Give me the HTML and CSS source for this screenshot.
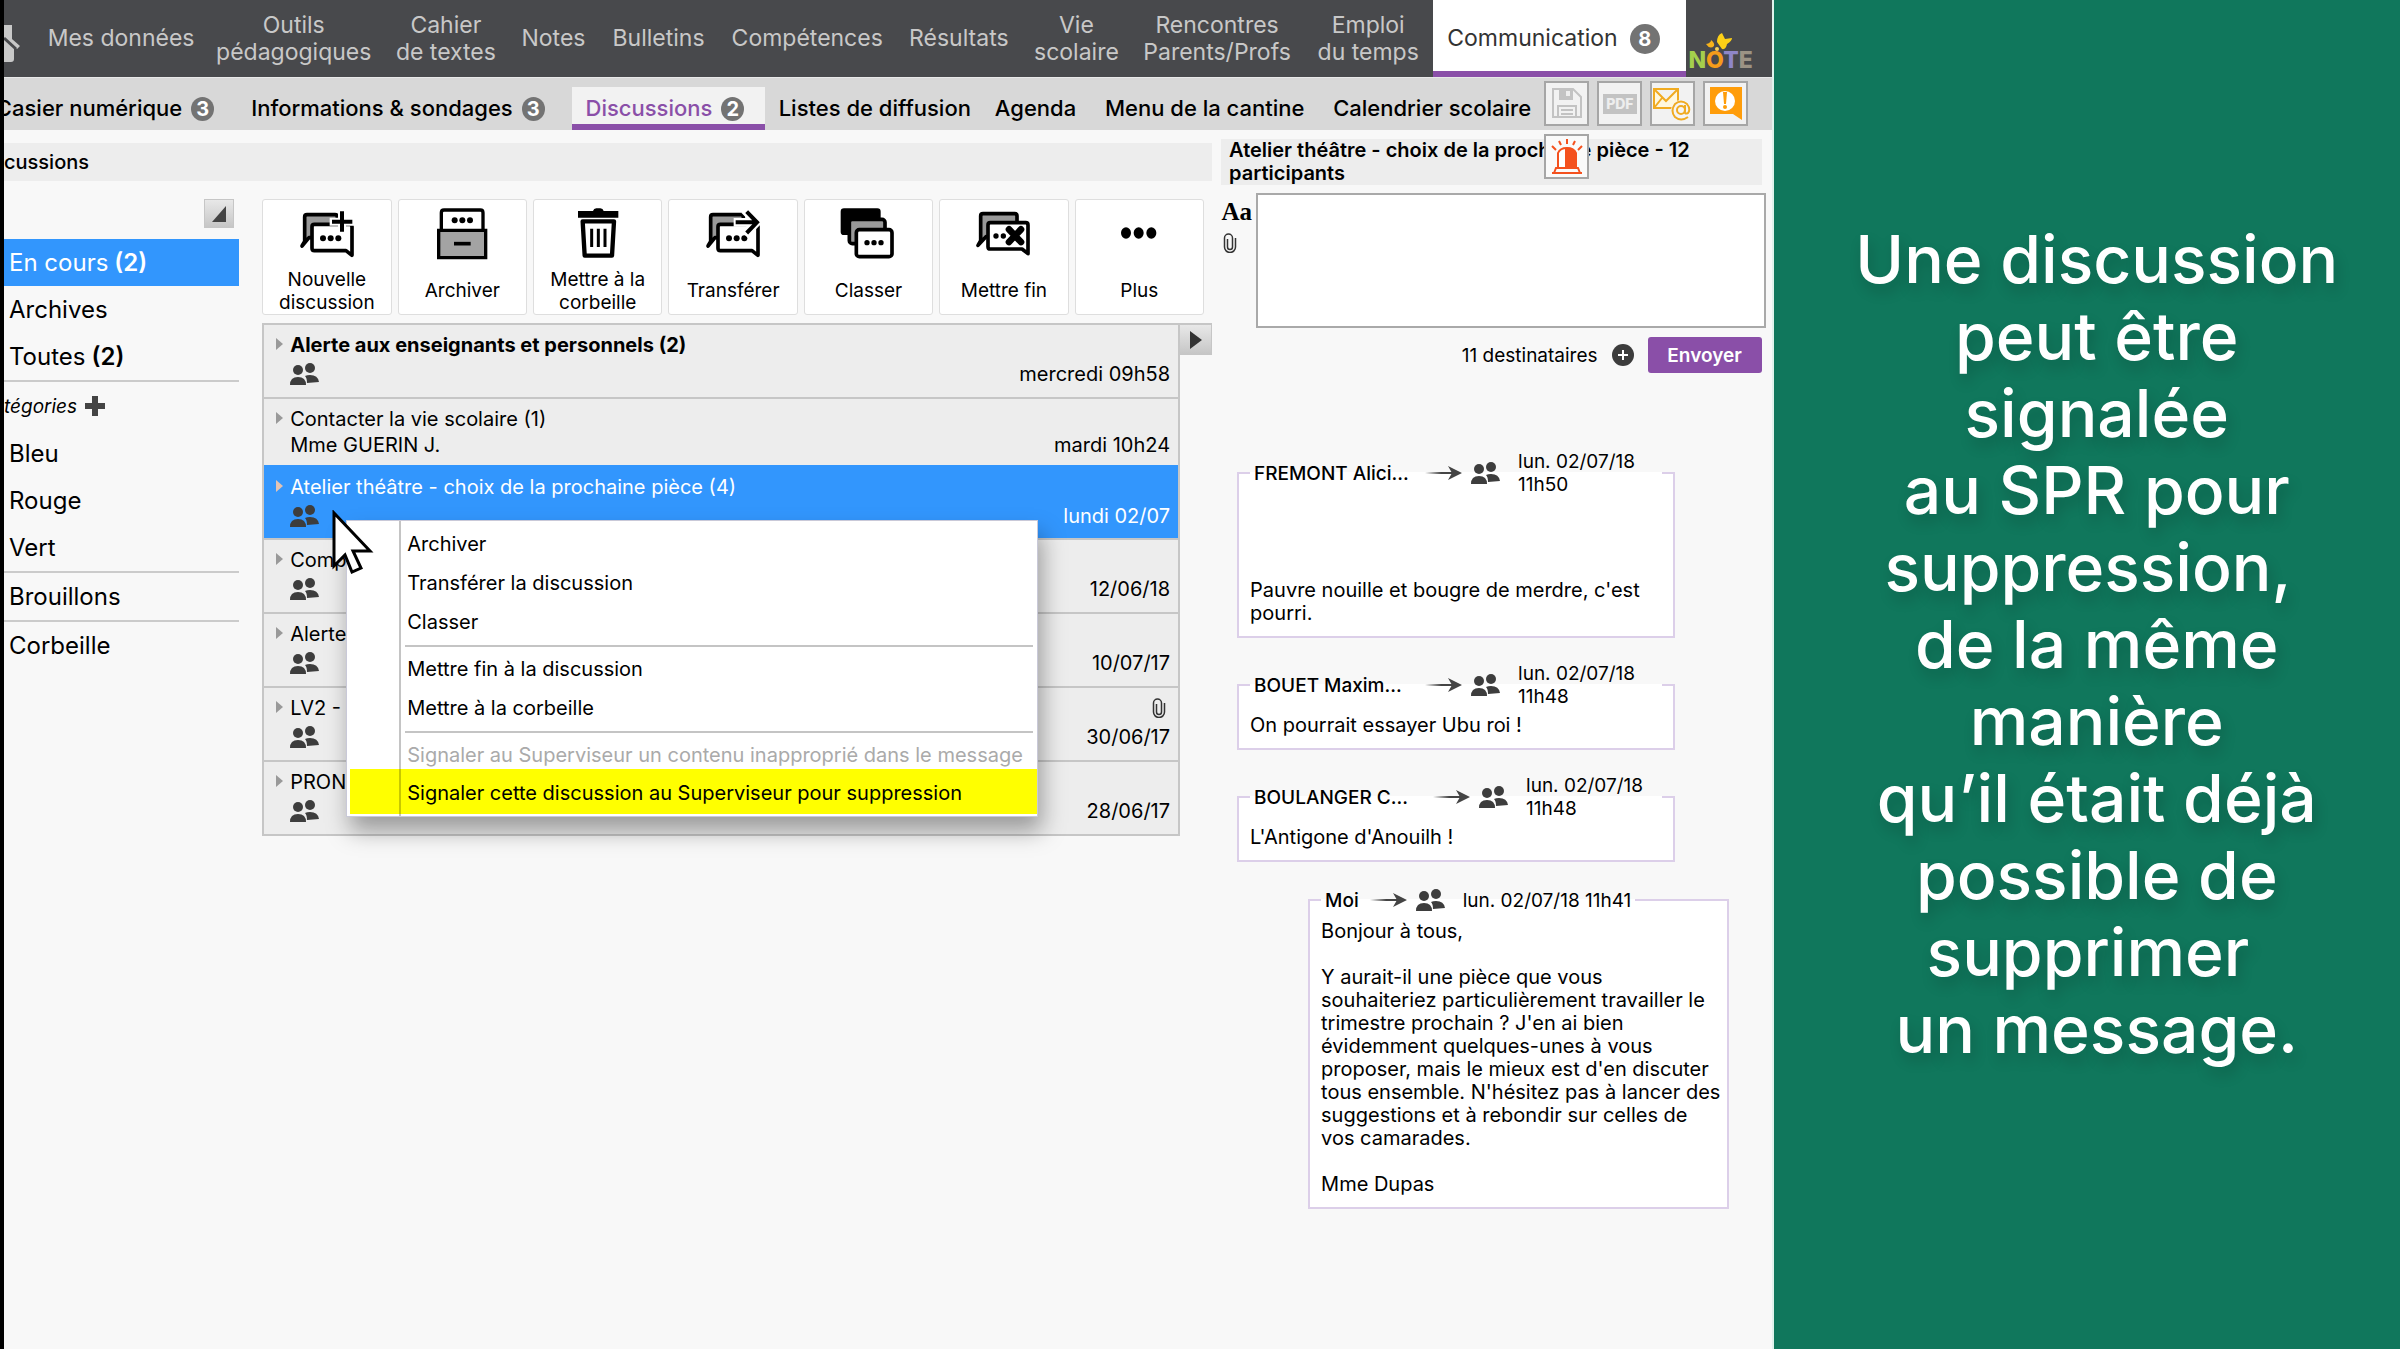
FILE: index.html
```html
<!DOCTYPE html>
<html lang="fr">
<head>
<meta charset="utf-8">
<title>Discussions</title>
<link rel="stylesheet" href="styles.css">
</head>
<body>
<svg class="defs" aria-hidden="true">
  <symbol id="people" viewBox="0 0 30 22">
    <circle cx="20" cy="5" r="5"/><path d="M17 20q0-5-2-7 2-1 5-1 8 0 9 7z"/>
    <circle cx="8" cy="7" r="5"/><path d="M0 22q0-8 8-8t8 8z"/>
  </symbol>
  <symbol id="arrow" viewBox="0 0 38 16">
    <path d="M0 7h27v2H0z" fill="url(#fade)"/><path d="M23 1l14 7-14 7 4-7z"/>
  </symbol>
  <symbol id="clip" viewBox="0 0 14 20">
    <path d="M4.500 6v8a2.500 2.500 0 0 0 5 0V5a4 4 0 0 0-8 0v9a5.500 5.500 0 0 0 11 0V5" fill="none" stroke="#333" stroke-width="1.500"/>
  </symbol>
  <linearGradient id="fade"><stop offset="0" stop-color="#444" stop-opacity="0"/><stop offset=".6" stop-color="#444"/></linearGradient>
</svg>

<div class="app">
  <nav class="nav">
    <a class="nav-home" href="#" aria-label="Accueil"><svg width="16" height="40" viewBox="0 0 16 40"><path d="M0 2h8v14l8 7-3 3-3-2v12q0 3-3 3H0V17z" fill="#c8c8c8"/><path d="M0 15l12 11" stroke="#48494c" stroke-width="3"/></svg></a>
    <a href="#">Mes données</a>
    <a href="#">Outils<br>pédagogiques</a>
    <a href="#">Cahier<br>de textes</a>
    <a href="#">Notes</a>
    <a href="#">Bulletins</a>
    <a href="#">Compétences</a>
    <a href="#">Résultats</a>
    <a href="#">Vie<br>scolaire</a>
    <a href="#">Rencontres<br>Parents/Profs</a>
    <a href="#">Emploi<br>du temps</a>
    <a class="active" href="#">Communication<span class="badge badge-big">8</span></a>
    <div class="logo">
      <svg width="30" height="18" viewBox="0 0 30 18"><path d="M11 9q0-7 5-9l3 6 7-1q0 3-5 6-1 6-5 5z" fill="#fdd017"/><path d="M0 11q5-1 5-4 4 3 3 6-4 4-8-2z" fill="#f6b21b"/><circle cx="11" cy="16" r="2" fill="#f6d35b"/></svg>
      <span><b class="n">N</b><b class="o">O</b><b class="t">T</b><b class="e">E</b></span>
    </div>
  </nav>

  <nav class="subnav">
    <a class="cut" href="#">Casier numérique<span class="badge">3</span></a>
    <a href="#">Informations &amp; sondages<span class="badge">3</span></a>
    <a class="active" href="#">Discussions<span class="badge">2</span></a>
    <a href="#">Listes de diffusion</a>
    <a href="#">Agenda</a>
    <a href="#">Menu de la cantine</a>
    <a href="#">Calendrier scolaire</a>
    <div class="tools">
      <button class="tool" aria-label="Enregistrer"><svg width="30" height="32" viewBox="0 0 30 32" fill="none" stroke="#c3c3c3" stroke-width="2"><path d="M1 1h20l8 8v20H1zM6 29V18h18v11M9 22h12M9 26h12"/><path d="M8 1h12v10H8z" fill="#c3c3c3"/><path d="M14 3h4v5h-4z" fill="#eee" stroke="none"/></svg></button>
      <button class="tool"><span class="pdf">PDF</span></button>
      <button class="tool" aria-label="Courriel"><svg width="39" height="36" viewBox="0 0 39 36" fill="none" stroke="#f0ab22" stroke-width="2"><path d="M1 3h24v19H1zM1 3l12 12L25 3M1 22l8-10" fill="#fff8df"/><circle cx="28" cy="24" r="10" fill="#f5f5f5" stroke="none"/><path d="M35 31q-7 5-13 0-5-6 0-13 6-5 12 0 4 5 1 9-4 2-3-3v-5"/><circle cx="28" cy="24" r="4"/></svg></button>
      <button class="tool" aria-label="Signaler"><svg width="34" height="34" viewBox="0 0 34 34"><path d="M1 0h32v33l-9-6H1z" fill="#ff9d0a"/><circle cx="16" cy="14" r="10" fill="#fff"/><path d="M14 5h4l-1 12h-2z" fill="#ff9d0a"/><circle cx="16" cy="20" r="2" fill="#ff9d0a"/></svg></button>
      <button class="tool alarm" aria-label="Alerte"><svg width="34" height="36" viewBox="0 0 34 36"><path d="M8 28V14q2-5 9-5t9 5v14" fill="#fff" stroke="#f4511e" stroke-width="2"/><path d="M15 9q9-1 11 5v14H15z" fill="#f4511e"/><path d="M2 34h30M4 34l2-5h22l2 5M17 0v5M9 2l2 4M25 2l-2 4M2 7l4 4M32 7l-4 4" fill="none" stroke="#f4511e" stroke-width="2"/></svg></button>
    </div>
  </nav>

  <main class="main">
    <h1 class="bar">cussions</h1>
    <h2 class="topic">Atelier théâtre - choix de la prochaine pièce - 12 participants</h2>

    <div class="left">
      <div class="side">
        <button class="mini" aria-label="Réduire"><svg width="14" height="16"><path d="M14 0v16H0z" fill="#444"/></svg></button>
        <ul class="folders">
          <li class="selected">En cours <b>(2)</b></li>
          <li>Archives</li>
          <li>Toutes <b>(2)</b></li>
          <li class="category"><em>tégories</em><svg width="20" height="20"><path d="M7 0h6v7h7v6h-7v7H7v-7H0V7h7z" fill="#444"/></svg></li>
          <li>Bleu</li>
          <li>Rouge</li>
          <li>Vert</li>
          <li class="ruled">Brouillons</li>
          <li class="ruled">Corbeille</li>
        </ul>
      </div>

      <div class="center">
        <div class="actions">
          <button><svg viewBox="0 0 180 165"><g fill="#999" stroke="#000" stroke-width="11" stroke-linejoin="round"><path d="M15 120l8-14V33q0-7 7-7h84q7 0 7 7v62H36z"/><path d="M52 55h106q7 0 7 7v86l-18-14H52q-7 0-7-7V62q0-7 7-7z" fill="#fff"/></g><circle cx="78" cy="97" r="9"/><circle cx="101" cy="97" r="9"/><circle cx="124" cy="97" r="9"/><path d="M135 8v76M98 47h76" stroke="#fff" stroke-width="24"/><path d="M135 16v61M105 47h61" stroke="#000" stroke-width="12"/></svg><span>Nouvelle discussion</span></button>
          <button><svg viewBox="0 0 180 165"><path d="M28 73V20q0-8 8-8h109q8 0 8 8v53" fill="#fff" stroke="#000" stroke-width="10"/><path d="M20 73h141v82H20z" fill="#a3a3a3" stroke="#000" stroke-width="10"/><path d="M66 113h50" stroke="#000" stroke-width="11"/><circle cx="68" cy="43" r="9"/><circle cx="91" cy="43" r="9"/><circle cx="114" cy="43" r="9"/></svg><span>Archiver</span></button>
          <button><svg viewBox="0 0 180 165"><path d="M30 15h45q2-8 10-8h12q8 0 10 8h44v20H30z"/><path d="M44 46h94l-6 103H50z" fill="#fff" stroke="#000" stroke-width="13" stroke-linejoin="round"/><path d="M71 68v55M91 68v55M111 68v55" stroke="#000" stroke-width="9"/></svg><span>Mettre à la corbeille</span></button>
          <button><svg viewBox="0 0 180 165"><g fill="#999" stroke="#000" stroke-width="11" stroke-linejoin="round"><path d="M15 120l8-14V33q0-7 7-7h84q7 0 7 7v62H36z"/><path d="M52 55h106q7 0 7 7v86l-18-14H52q-7 0-7-7V62q0-7 7-7z" fill="#fff"/></g><circle cx="78" cy="97" r="9"/><circle cx="101" cy="97" r="9"/><circle cx="124" cy="97" r="9"/><path d="M92 49h68M125 12l36 37-36 37" stroke="#fff" stroke-width="26" fill="none"/><path d="M98 49h64M131 17l31 32-31 32" stroke="#000" stroke-width="12" fill="none"/></svg><span>Transférer</span></button>
          <button><svg viewBox="0 0 180 165"><rect x="5" y="7" width="120" height="80" rx="10"/><g stroke="#000" stroke-width="11"><rect x="31" y="40" width="107" height="73" rx="9" fill="#999"/><rect x="52" y="71" width="107" height="81" rx="9" fill="#fff"/></g><circle cx="84" cy="110" r="8"/><circle cx="105" cy="110" r="8"/><circle cx="126" cy="110" r="8"/></svg><span>Classer</span></button>
          <button><svg viewBox="0 0 180 165"><g fill="#999" stroke="#000" stroke-width="11" stroke-linejoin="round"><path d="M12 118l8-14V30q0-7 7-7h95q7 0 7 7v62H36z"/><path d="M49 50h106q7 0 7 7v86l-18-14H49q-7 0-7-7V57q0-7 7-7z" fill="#fff"/></g><circle cx="66" cy="90" r="8"/><circle cx="88" cy="90" r="8"/><path d="M105 70l36 38M141 70l-36 38" stroke="#000" stroke-width="20" stroke-linecap="round"/></svg><span>Mettre fin</span></button>
          <button><svg viewBox="0 0 180 165"><ellipse cx="51" cy="81" rx="15" ry="17"/><ellipse cx="89" cy="81" rx="15" ry="17"/><ellipse cx="127" cy="81" rx="15" ry="17"/></svg><span>Plus</span></button>
        </div>

        <div class="threads">
          <ul class="list">
            <li class="unread"><div class="title">Alerte aux enseignants et personnels (2)</div><div class="meta"><svg class="people"><use href="#people"/></svg><time>mercredi 09h58</time></div></li>
            <li class="direct"><div class="title">Contacter la vie scolaire (1)</div><div class="meta">Mme GUERIN J.<time>mardi 10h24</time></div></li>
            <li class="current"><div class="title">Atelier théâtre - choix de la prochaine pièce (4)</div><div class="meta"><svg class="people"><use href="#people"/></svg><time>lundi 02/07</time></div></li>
            <li><div class="title">Comp</div><div class="meta"><svg class="people"><use href="#people"/></svg><time>12/06/18</time></div></li>
            <li><div class="title">Alerte</div><div class="meta"><svg class="people"><use href="#people"/></svg><time>10/07/17</time></div></li>
            <li><div class="title">LV2 - V<svg class="clip"><use href="#clip"/></svg></div><div class="meta"><svg class="people"><use href="#people"/></svg><time>30/06/17</time></div></li>
            <li><div class="title">PRON</div><div class="meta"><svg class="people"><use href="#people"/></svg><time>28/06/17</time></div></li>
          </ul>
          <button class="mini" aria-label="Déplier"><svg width="12" height="18"><path d="M0 0l12 9-12 9z" fill="#333"/></svg></button>

          <div class="menu" role="menu">
            <button role="menuitem">Archiver</button>
            <button role="menuitem">Transférer la discussion</button>
            <button role="menuitem">Classer</button>
            <hr>
            <button role="menuitem">Mettre fin à la discussion</button>
            <button role="menuitem">Mettre à la corbeille</button>
            <hr>
            <button role="menuitem" disabled>Signaler au Superviseur un contenu inapproprié dans le message</button>
            <button role="menuitem" class="marked">Signaler cette discussion au Superviseur pour suppression</button>
          </div>
          <svg class="cursor" viewBox="0 0 42 64"><path d="M2 3v53l11-11 7 17 9-4-8-17h17z" fill="#fff" stroke="#000" stroke-width="3"/></svg>
        </div>
      </div>
    </div>

    <section class="right">
      <form class="compose">
        <div class="format"><b>Aa</b><svg class="clip"><use href="#clip"/></svg></div>
        <textarea aria-label="Message"></textarea>
        <div class="send"><span>11 destinataires</span><svg width="22" height="22"><circle cx="11" cy="11" r="11" fill="#3c3c3c"/><path d="M11 6v10M6 11h10" stroke="#fff" stroke-width="2"/></svg><button type="button">Envoyer</button></div>
      </form>

      <div class="messages">
        <fieldset class="tall">
          <legend><b>FREMONT Alici...</b><svg class="arrow"><use href="#arrow"/></svg><svg class="people"><use href="#people"/></svg><time>lun. 02/07/18<br>11h50</time></legend>
          <p>Pauvre nouille et bougre de merdre, c'est pourri.</p>
        </fieldset>
        <fieldset>
          <legend><b>BOUET Maxim...</b><svg class="arrow"><use href="#arrow"/></svg><svg class="people"><use href="#people"/></svg><time>lun. 02/07/18<br>11h48</time></legend>
          <p>On pourrait essayer Ubu roi !</p>
        </fieldset>
        <fieldset class="long">
          <legend><b>BOULANGER C...</b><svg class="arrow"><use href="#arrow"/></svg><svg class="people"><use href="#people"/></svg><time>lun. 02/07/18<br>11h48</time></legend>
          <p>L'Antigone d'Anouilh !</p>
        </fieldset>
        <fieldset class="mine">
          <legend><b>Moi</b><svg class="arrow"><use href="#arrow"/></svg><svg class="people"><use href="#people"/></svg><time>lun. 02/07/18 11h41</time></legend>
          <p>Bonjour à tous,</p>
          <p>Y aurait-il une pièce que vous<br>souhaiteriez particulièrement travailler le<br>trimestre prochain ? J'en ai bien<br>évidemment quelques-unes à vous<br>proposer, mais le mieux est d'en discuter<br>tous ensemble. N'hésitez pas à lancer des<br>suggestions et à rebondir sur celles de<br>vos camarades.</p>
          <p>Mme Dupas</p>
        </fieldset>
      </div>
    </section>
  </main>
</div>

<aside class="caption">
  <p>Une discussion<br>peut être<br>signalée<br>au SPR pour<br>suppression,&nbsp;<br>de la même<br>manière<br>qu’il était déjà<br>possible de<br>supprimer&nbsp;<br>un message.</p>
</aside>
</body>
</html>
```
FILE: styles.css
```css
* { box-sizing: border-box; }
body {
  margin: 0;
  display: flex;
  min-height: 100vh;
  font: 20px/23px Inter, "Open Sans", sans-serif;
  color: #000;
  background: #f8f8f8;
}
h1, h2, p, ul { margin: 0; padding: 0; font-size: inherit; }
ul { list-style: none; }
a { color: inherit; text-decoration: none; }
button { font: inherit; color: inherit; padding: 0; }
.defs { position: absolute; width: 0; height: 0; }

.app {
  flex: 1772;
  min-width: 0;
  overflow: hidden;
  border-left: 4px solid #000;
  border-right: 2px solid #dff3ec;
}

/* main navigation */
.nav {
  display: grid;
  grid-template-columns: 34fr 166fr 179fr 125fr 90fr 120fr 177fr 126fr 109fr 172fr 130fr 253fr 85fr;
  height: 77px;
  background: #48494c;
  color: #c8c8c8;
  font-size: 23px;
  line-height: 27px;
}
.nav > a {
  display: flex;
  align-items: center;
  justify-content: center;
  text-align: center;
  white-space: nowrap;
}
.nav > .nav-home { justify-content: flex-start; padding-top: 8px; }
.nav > .active {
  justify-content: flex-start;
  padding-left: 14px;
  background: #fff;
  color: #333;
  border-top: 6px solid #fff;
  border-bottom: 6px solid #8a4fa8;
}
.badge {
  flex: none;
  width: 23px;
  height: 24px;
  margin-left: 9px;
  border-radius: 50%;
  background: #737373;
  color: #fff;
  font-size: 20px;
  font-weight: 700;
  line-height: 24px;
  text-align: center;
}
.badge-big { width: 30px; height: 30px; margin-left: 12px; line-height: 30px; }
.logo {
  display: flex;
  flex-direction: column;
  justify-content: flex-end;
  padding: 0 0 4px 2px;
  font-size: 23px;
  line-height: 26px;
}
.logo svg { margin-left: 18px; margin-bottom: -4px; }
.logo b { font-weight: 800; }
.n { color: #a5cf4c; }
.o { color: #f59c1a; }
.t { color: #8e86c8; }
.e { color: #9c9384; }

/* secondary navigation */
.subnav {
  display: grid;
  grid-template-columns: minmax(0, 233fr) 334fr 193fr 216fr 110fr 228fr 225fr 227fr;
  height: 53px;
  padding-top: 9px;
  background: #d8d8d8;
  border-top: 1px solid #e8e8e8;
  font-size: 22px;
  font-weight: 500;
}
.subnav > a {
  display: flex;
  align-items: center;
  padding: 0 0 0 14px;
  white-space: nowrap;
}
.subnav > .cut { justify-content: flex-end; padding: 0 23px 0 0; }
.subnav > .active {
  background: #f2f2f2;
  color: #8a4fa8;
  border-top: 6px solid #f2f2f2;
  border-bottom: 6px solid #8a4fa8;
}
.tools {
  position: relative;
  display: flex;
  gap: 8px;
  align-self: start;
  margin-top: -6px;
}
.tool {
  display: flex;
  align-items: center;
  justify-content: center;
  width: 45px;
  height: 45px;
  background: #f2f2f2;
  border: 2px solid #a6a6a6;
}
.alarm { position: absolute; left: 0; top: 53px; background: #fafafa; }
.pdf {
  width: 34px;
  background: #c3c3c3;
  color: #eee;
  font-size: 14px;
  font-weight: 800;
  line-height: 20px;
}

/* page columns */
.main {
  display: grid;
  grid-template-columns: minmax(0, 1207fr) minmax(0, 550fr);
  gap: 14px 9px;
  align-items: start;
  padding-top: 9px;
}
.bar, .topic { background: #ededed; font-weight: 500; }
.bar { align-self: center; line-height: 38px; }
.topic { margin-right: 10px; padding-left: 8px; font-weight: 600; }
.left {
  display: grid;
  grid-template-columns: minmax(0, 235fr) minmax(0, 949fr);
  gap: 23px;
}
.mini {
  display: flex;
  align-items: center;
  justify-content: center;
  width: 30px;
  height: 29px;
  background: linear-gradient(#e8e8e8, #c6c6c6);
  border: 1px solid #c6c6c6;
}
.side { font-size: 24px; }
.side .mini { margin: 0 5px 11px auto; }
.folders li {
  display: flex;
  align-items: center;
  gap: 6px;
  height: 47px;
  padding-left: 5px;
}
.folders b { font-weight: 600; }
.folders .selected { background: #3296fd; color: #fff; }
.folders .category {
  height: 50px;
  padding: 0;
  gap: 8px;
  border-top: 2px solid #cbcbcb;
  font-size: 19px;
}
.folders .ruled { height: 49px; border-top: 2px solid #cbcbcb; }

/* action buttons */
.actions {
  display: grid;
  grid-template-columns: repeat(7, 1fr);
  gap: 6px;
  margin: 0 8px 8px 0;
}
.actions button {
  display: flex;
  flex-direction: column;
  align-items: center;
  height: 116px;
  padding: 6px 12px 0;
  background: #fff;
  border: 1px solid #dedede;
  border-radius: 3px;
  font-size: 19px;
}
.actions svg { flex: none; width: 60px; height: 55px; }
.actions span { flex: 1; display: flex; align-items: center; padding-top: 6px; }

/* discussion list */
.threads { position: relative; display: flex; align-items: flex-start; }
.list {
  flex: 1;
  background: #ededed;
  border: 2px solid #c6c6c6;
  border-top: 0;
}
.list li {
  position: relative;
  height: 74px;
  padding: 8px 8px 0 26px;
  border-top: 2px solid #c6c6c6;
}
.list li::before {
  content: "";
  position: absolute;
  left: 12px;
  top: 13px;
  border: solid transparent;
  border-width: 6px 0 6px 7px;
  border-left-color: #999;
}
.list .direct { height: 68px; }
.list .direct .meta { margin-top: 2px; }
.list .current { height: 73px; background: #3296fd; color: #fff; border-top-color: #3296fd; }
.list .current::before { border-left-color: #e3c3b4; }
.unread .title { font-weight: 700; }
.title, .meta { display: flex; align-items: center; justify-content: space-between; height: 24px; }
.meta { margin-top: 5px; }
.meta time { margin-left: auto; }
.people { flex: none; width: 30px; height: 22px; fill: #3d3d3d; }
.clip { width: 14px; height: 20px; margin-right: 4px; }
.threads > .mini { width: 33px; height: 32px; margin-left: -1px; border-top: 2px solid #c6c6c6; }

/* context menu */
.menu {
  position: absolute;
  left: 84px;
  top: 197px;
  width: 692px;
  padding: 4px 0 2px;
  background: linear-gradient(90deg, transparent 52px, #c4c4c4 52px, #c4c4c4 54px, transparent 54px), #fff;
  border: 1px solid #c9c9d8;
  box-shadow: 4px 14px 22px rgba(0, 0, 0, .35);
}
.menu button {
  display: block;
  width: 100%;
  height: 39px;
  padding-left: 60px;
  background: none;
  border: 0;
  text-align: left;
  white-space: nowrap;
}
.menu button:disabled { color: #aaa; }
.menu hr { height: 2px; margin: 3px 4px 3px 58px; border: 0; background: #c4c4c4; }
.menu .marked {
  width: calc(100% - 3px);
  height: 45px;
  margin: -6px 0 0 3px;
  padding: 4px 0 0 57px;
  background: linear-gradient(90deg, transparent 49px, #c8c800 49px, #c8c800 51px, transparent 51px), #ff0;
}
.cursor { position: absolute; left: 70px; top: 187px; width: 42px; height: 64px; }

/* message composer */
.compose {
  display: grid;
  grid-template-columns: 35px 1fr;
  row-gap: 9px;
  margin: -6px 6px 0 0;
}
.format { padding: 7px 4px 0 0; text-align: right; }
.format b { display: block; font: 700 25px/24px "Liberation Serif", serif; margin-left: -4px; }
.format svg { display: block; margin: 9px 0 0 2px; }
textarea { display: block; width: 100%; height: 135px; border: 2px solid #a9a9a9; border-radius: 0; background: #fff; resize: none; }
.send {
  grid-column: 2;
  display: flex;
  align-items: center;
  justify-content: flex-end;
  gap: 14px;
  padding-right: 4px;
  font-size: 19px;
}
.send button {
  width: 114px;
  height: 36px;
  border: 0;
  border-radius: 3px;
  background: #8a4fa8;
  color: #fff;
  font-weight: 600;
}

/* message thread */
.messages {
  display: flex;
  flex-direction: column;
  gap: 24px;
  padding: 77px 97px 0 16px;
}
fieldset {
  min-width: 0;
  margin: 0;
  padding: 6px 11px 11px;
  border: 2px solid #dccfe9;
  background: #fff;
}
legend {
  display: flex;
  align-items: center;
  width: 100%;
  height: 46px;
  padding: 0 4px;
  font-size: 19px;
  white-space: nowrap;
}
legend b { width: 171px; font-weight: 500; }
.long legend b { width: 179px; }
.arrow { flex: none; width: 38px; height: 16px; margin-right: 8px; fill: #444; }
legend time { margin-left: 17px; }
.tall p { margin-top: 77px; }
.mine { margin: 0 -54px 0 71px; padding-right: 4px; }
.mine legend { width: auto; height: 28px; }
.mine legend b { width: auto; margin-right: 11px; }
.mine p + p { margin-top: 23px; }

/* green caption */
.caption {
  flex: 628;
  min-width: 0;
  background: #10775c;
  color: #fff;
  font-size: 66px;
  font-weight: 500;
  line-height: 77px;
  text-align: center;
  white-space: nowrap;
  text-shadow: 3px 8px 14px rgba(0, 0, 0, .18);
}
.caption p { padding: 221px 0 0 20px; }
```
